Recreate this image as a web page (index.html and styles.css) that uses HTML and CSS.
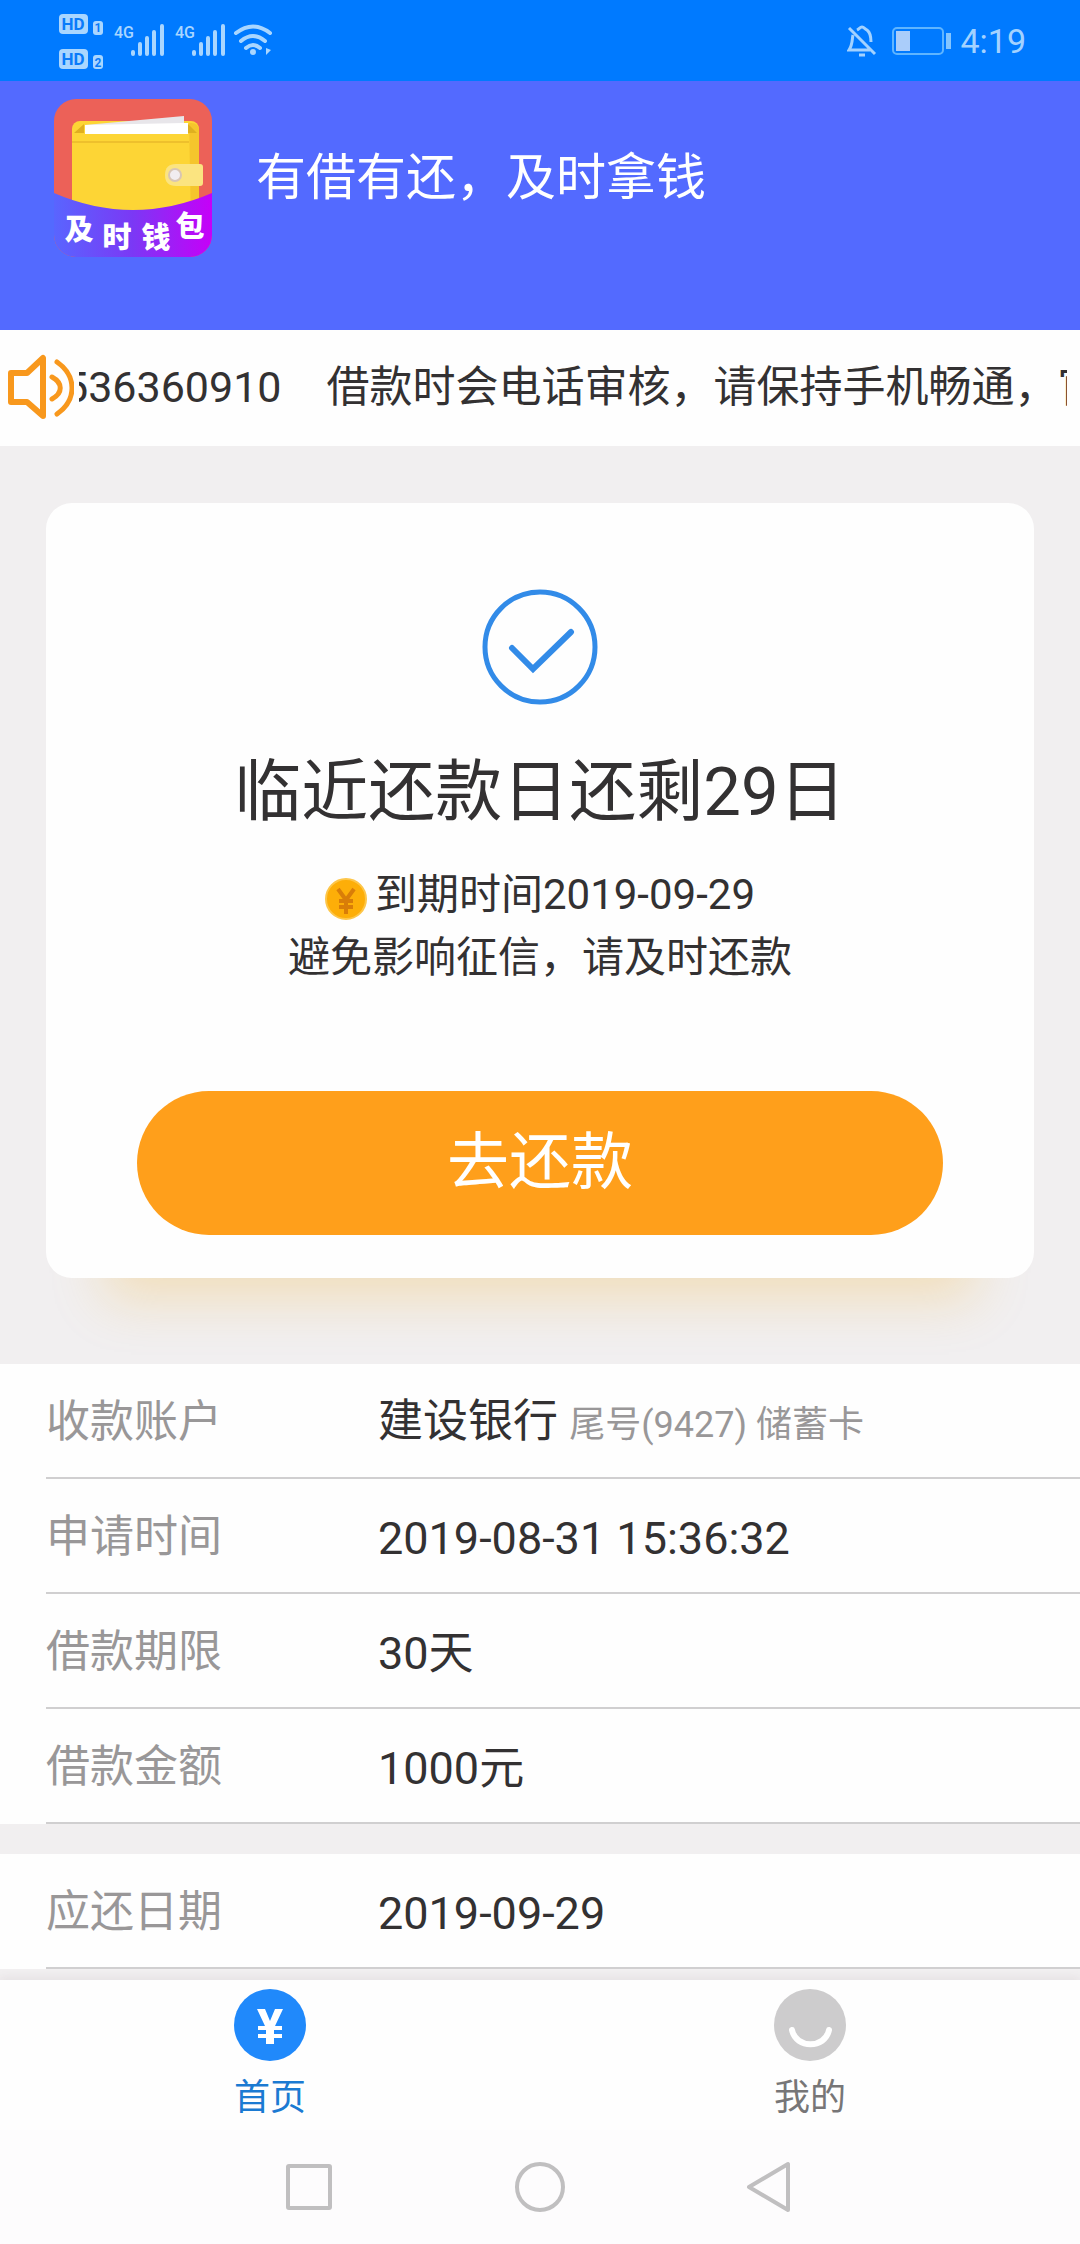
FILE: index.html
```html
<!DOCTYPE html>
<html lang="zh-CN">
<head>
<meta charset="utf-8">
<meta name="viewport" content="width=device-width, initial-scale=1">
<title>及时钱包</title>
<link rel="stylesheet" href="styles.css">
</head>
<body>
<div class="app">
  <div class="status">
    <svg class="status-signals" width="210" height="58" viewBox="0 0 210 58" aria-hidden="true">
      <g fill="#a9d6ff">
        <rect x="0" y="2" width="29" height="20" rx="4"/>
        <rect x="34" y="9" width="10" height="14" rx="3"/>
        <rect x="0" y="37" width="29" height="20" rx="4"/>
        <rect x="34" y="43" width="10" height="14" rx="3"/>
      </g>
      <g class="status-badge" fill="#0a7bfa" text-anchor="middle">
        <text x="14" y="18" font-size="17">HD</text>
        <text x="39" y="20" font-size="12">1</text>
        <text x="14" y="53" font-size="17">HD</text>
        <text x="39" y="55" font-size="12">2</text>
      </g>
      <g class="status-net" fill="#a9d6ff" font-size="16">
        <text x="55" y="26">4G</text>
        <text x="116" y="26">4G</text>
      </g>
      <g stroke="#a9d6ff" stroke-width="4" stroke-linecap="round">
        <path d="M74 40v2M81 32v10M88 26v16M95 20v22M103 14v28"/>
        <path d="M135 40v2M142 32v10M149 26v16M156 20v22M164 14v28"/>
        <path fill="none" d="M177 21q17-13 34 0M182 29q12-10 24 0M187 36q7-6 14 0"/>
      </g>
      <circle cx="194" cy="40" r="3" fill="#a9d6ff"/>
      <path d="M207 43v-7l5 2z" fill="#a9d6ff"/>
    </svg>
    <div class="status-right">
      <svg width="30" height="32" viewBox="0 0 30 32" fill="none" stroke="#a3d2ff" stroke-width="3" aria-hidden="true">
        <path d="M6 10c-1 3 0 9-4 15h21M10 5c2-1 3-3 5-3s3 2 5 3c4 3 4 8 4 12M2 3l26 26M12 30h6"/>
      </svg>
      <svg class="battery" width="60" height="28" viewBox="0 0 60 28" aria-hidden="true">
        <rect x="1" y="1" width="50" height="26" rx="4" fill="none" stroke="#5fb5ff" stroke-width="2"/>
        <rect x="4" y="4" width="14" height="20" fill="#aacdfa"/>
        <rect x="54" y="6" width="5" height="16" fill="#84c5ff"/>
      </svg>
      <span class="clock">4:19</span>
    </div>
  </div>

  <header class="banner">
    <svg class="logo" viewBox="0 0 158 158" role="img" aria-label="及时钱包">
      <defs>
        <clipPath id="tile"><rect width="158" height="158" rx="22"/></clipPath>
        <linearGradient id="ribbon" x1="0" x2="1"><stop offset="0" stop-color="#5965ff"/><stop offset=".5" stop-color="#7b38f5"/><stop offset="1" stop-color="#c600f8"/></linearGradient>
      </defs>
      <g clip-path="url(#tile)">
        <rect width="158" height="158" fill="#ec6158"/>
        <rect x="18" y="22" width="127" height="100" rx="8" fill="#fdd535"/>
        <path d="M135 24h2q8 0 8 8v90h-8z" fill="#f5c52c"/>
        <path d="M20 34l10-9v9zM134 25l9 9h-9z" fill="#dfaf20"/>
        <path d="M18 43h117" stroke="#eec02c" stroke-width="2"/>
        <path d="M31 26l99-9v17H31z" fill="#e8e6ea"/>
        <path d="M31 26l99-2h4v11H31z" fill="#fff"/>
        <path d="M122 65h24q3 0 3 3v16q0 3-3 3h-24q-11 0-11-11t11-11z" fill="#fbe480"/>
        <circle cx="121" cy="76" r="6" fill="#f1edf0" stroke="#d8c5b4" stroke-width="2"/>
        <path d="M0 94q79 34 158 0v64H0z" fill="url(#ribbon)"/>
        <g class="logo-text" fill="#fff" text-anchor="middle">
          <text x="25" y="141">及</text><text x="63" y="149">时</text><text x="102" y="149">钱</text><text x="136" y="138">包</text>
        </g>
      </g>
    </svg>
    <h1 class="slogan">有借有还，及时拿钱</h1>
  </header>

  <div class="notice">
    <svg class="notice-icon" viewBox="0 0 66 66" fill="none" stroke="#f8981d" stroke-linejoin="round" stroke-linecap="round" aria-hidden="true">
      <path stroke-width="6" d="M3 19h16L35 4v58L19 48H3z"/>
      <path stroke-width="5" d="M49 8c20 14 20 38 0 52M44 23c11 6 11 16 0 22"/>
    </svg>
    <div class="ticker"><div class="ticker-text"><span>536360910</span><span>借款时会电话审核，请保持手机畅通，官</span></div></div>
  </div>

  <main class="content">
    <section class="card">
      <svg class="card-check" viewBox="0 0 116 116" fill="none" stroke="#328be8" stroke-width="5" aria-hidden="true">
        <circle cx="58" cy="58" r="55"/>
        <path d="M30 59l21 21 38-37" stroke-width="6" stroke-linecap="round"/>
      </svg>
      <h2 class="card-title">临近还款日还剩29日</h2>
      <p class="card-note">
        <span class="due"><svg class="coin" viewBox="0 0 42 42" aria-hidden="true">
          <circle cx="21" cy="21" r="20" fill="#fdae08" stroke="#fdc64a" stroke-width="2"/>
          <path d="M13 11l8 11 8-11M21 22v14M14 23h14M14 29h14" fill="none" stroke="#d97d08" stroke-width="4"/>
        </svg>到期时间2019-09-29</span>
        <span>避免影响征信，请及时还款</span>
      </p>
      <button class="pay" type="button">去还款</button>
    </section>

    <dl class="details">
      <div class="row"><dt>收款账户</dt><dd>建设银行 <small>尾号(9427) 储蓄卡</small></dd></div>
      <div class="row"><dt>申请时间</dt><dd>2019-08-31 15:36:32</dd></div>
      <div class="row"><dt>借款期限</dt><dd>30天</dd></div>
      <div class="row"><dt>借款金额</dt><dd>1000元</dd></div>
    </dl>
    <dl class="details">
      <div class="row"><dt>应还日期</dt><dd>2019-09-29</dd></div>
    </dl>
  </main>

  <nav class="tabs">
    <a class="tab tab-active" href="#home">
      <svg class="tab-icon" viewBox="0 0 72 72" aria-hidden="true">
        <circle cx="36" cy="36" r="36" fill="#2089fb"/>
        <path d="M23 20h8l5 12 5-12h8l-8 17h7v4h-8v4h8v4h-8v6h-8v-6h-8v-4h8v-4h-8v-4h7z" fill="#fff"/>
      </svg>
      首页
    </a>
    <a class="tab" href="#mine">
      <svg class="tab-icon" viewBox="0 0 72 72" aria-hidden="true">
        <circle cx="36" cy="36" r="36" fill="#cdcccd"/>
        <path d="M18 41c4 19 33 19 37 0" fill="none" stroke="#fff" stroke-width="6" stroke-linecap="round"/>
      </svg>
      我的
    </a>
  </nav>

  <div class="system-nav">
    <button type="button" aria-label="最近任务"><svg viewBox="0 0 54 54"><rect x="6" y="6" width="42" height="42" rx="1"/></svg></button>
    <button type="button" aria-label="主屏幕"><svg viewBox="0 0 54 54"><circle cx="27" cy="27" r="23"/></svg></button>
    <button type="button" aria-label="返回"><svg viewBox="0 0 54 54"><path d="M44 4v46L5 27z"/></svg></button>
  </div>
</div>
</body>
</html>
```
FILE: styles.css
```css
* {
  box-sizing: border-box;
}

body,
h1,
h2,
p,
dl,
dd {
  margin: 0;
}

body {
  background: #f1eff0;
  color: #333132;
  font-family: Roboto, "Noto Sans CJK SC", sans-serif;
  font-size: 44px;
  line-height: 60px;
}

svg {
  display: block;
  flex: none;
}

.app {
  display: flex;
  flex-direction: column;
  height: 100vh;
}

/* Phone status bar */
.status {
  display: flex;
  flex: none;
  align-items: center;
  justify-content: space-between;
  height: 81px;
  padding: 0 54px 0 59px;
  background: #007aff;
}

.status-signals {
  overflow: visible;
}

.status-badge {
  font-weight: 700;
}

.status-net {
  font-weight: 500;
}

.status-right {
  display: flex;
  align-items: center;
  gap: 8px;
}

.battery {
  margin-left: 7px;
}

.clock {
  color: #a3d2ff;
  font-size: 34px;
}

/* Brand banner */
.banner {
  display: flex;
  flex: none;
  align-items: center;
  gap: 44px;
  padding: 18px 54px 73px;
  background: #536aff;
}

.logo {
  width: 158px;
  height: 158px;
}

.logo-text {
  font-size: 29px;
  font-weight: 900;
}

.slogan {
  color: #fff;
  font-size: 50px;
  font-weight: 400;
}

/* Scrolling notice */
.notice {
  display: flex;
  flex: none;
  align-items: center;
  gap: 5px;
  height: 116px;
  padding: 0 13px 2px 8px;
  background: #fefefe;
}

.notice-icon {
  width: 66px;
  height: 66px;
}

.ticker {
  flex: 1;
  overflow: hidden;
}

.ticker-text {
  display: flex;
  gap: 45px;
  margin-left: -15px;
  font-size: 43px;
  white-space: nowrap;
}

/* Page content */
.content {
  flex: 1;
  min-height: 0;
  overflow: hidden;
}

.card {
  display: flex;
  flex-direction: column;
  align-items: center;
  margin: 57px 46px 86px;
  padding: 86px 91px 43px;
  border-radius: 26px;
  background: #fefefe;
  box-shadow: 0 80px 50px -60px rgba(245, 175, 30, 0.26);
}

.card-check {
  width: 116px;
  height: 116px;
}

.card-title {
  margin-top: 39px;
  font-size: 67px;
  font-weight: 400;
  line-height: 96px;
}

.card-note {
  display: flex;
  flex-direction: column;
  align-items: center;
  margin-top: 23px;
  font-size: 42px;
  line-height: 63px;
}

.due {
  display: flex;
  align-items: center;
  gap: 8px;
}

.coin {
  width: 42px;
  height: 42px;
  margin-top: 8px;
}

.pay {
  width: 100%;
  height: 144px;
  margin-top: 102px;
  padding: 0;
  border: 0;
  border-radius: 72px;
  background: #ff9f1b;
  color: #fff;
  font: inherit;
  font-size: 62px;
}

/* Loan details */
.details {
  padding-left: 46px;
  background: #fefefe;
}

.details + .details {
  margin-top: 30px;
}

.row {
  display: flex;
  align-items: center;
  height: 115px;
  padding-top: 2px;
  border-bottom: 2px solid #d0cfd0;
}

.row dt {
  width: 332px;
  color: #999798;
}

.row dd {
  padding-top: 4px;
  font-size: 45px;
}

.row small {
  color: #999798;
  font-size: 36px;
}

/* Bottom tabs */
.tabs {
  display: flex;
  flex: none;
  height: 150px;
  background: #fefefe;
  box-shadow: 0 -3px 8px rgba(60, 40, 50, 0.06);
}

.tab {
  display: flex;
  flex: 1;
  flex-direction: column;
  align-items: center;
  gap: 7px;
  padding-top: 9px;
  color: #777677;
  font-size: 36px;
  text-decoration: none;
}

.tab-active {
  color: #1b7ad2;
}

.tab-icon {
  width: 72px;
  height: 72px;
}

/* Phone navigation keys */
.system-nav {
  display: flex;
  flex: none;
  align-items: center;
  justify-content: center;
  gap: 177px;
  height: 114px;
  background: #fdfcfd;
}

.system-nav button {
  padding: 0;
  border: 0;
  background: none;
}

.system-nav svg {
  width: 54px;
  height: 54px;
  fill: none;
  stroke: #c0bfc0;
  stroke-width: 4px;
  stroke-linejoin: round;
}
```
